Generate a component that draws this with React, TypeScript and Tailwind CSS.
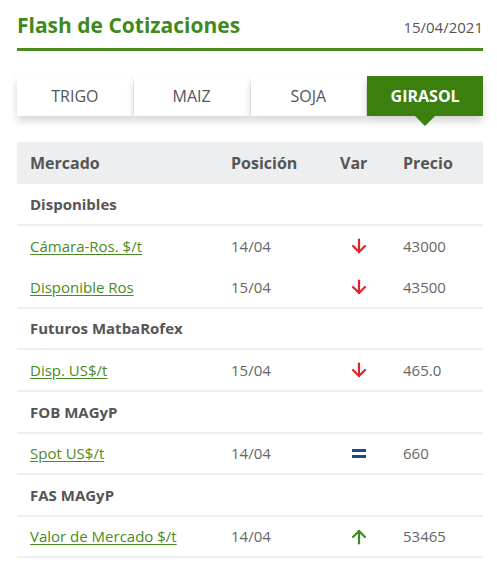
import React from 'react';

type Row =
  | { kind: 'section'; label: string; border?: boolean }
  | { kind: 'data'; label: string; pos: string; v: 'down' | 'up' | 'eq'; price: string; border?: boolean };

const rows: Row[] = [
  { kind: 'section', label: 'Disponibles', border: true },
  { kind: 'data', label: 'Cámara-Ros. $/t', pos: '14/04', v: 'down', price: '43000' },
  { kind: 'data', label: 'Disponible Ros', pos: '15/04', v: 'down', price: '43500', border: true },
  { kind: 'section', label: 'Futuros MatbaRofex', border: true },
  { kind: 'data', label: 'Disp. US$/t', pos: '15/04', v: 'down', price: '465.0', border: true },
  { kind: 'section', label: 'FOB MAGyP', border: true },
  { kind: 'data', label: 'Spot US$/t', pos: '14/04', v: 'eq', price: '660', border: true },
  { kind: 'section', label: 'FAS MAGyP', border: true },
  { kind: 'data', label: 'Valor de Mercado $/t', pos: '14/04', v: 'up', price: '53465', border: true },
];

const tabs = ['TRIGO', 'MAIZ', 'SOJA', 'GIRASOL'];

function VarIcon({ v }: { v: 'down' | 'up' | 'eq' }) {
  if (v === 'eq') {
    return (
      <svg width="16" height="16" viewBox="0 0 16 16">
        <rect x="1" y="4" width="14" height="3" fill="#1d4a8c" />
        <rect x="1" y="10" width="14" height="3" fill="#1d4a8c" />
      </svg>
    );
  }
  const color = v === 'down' ? '#e2232b' : '#3f8a1c';
  return (
    <svg width="16" height="16" viewBox="0 0 16 16" fill="none" stroke={color} strokeWidth="2.2" strokeLinecap="round" strokeLinejoin="round">
      {v === 'down' ? (
        <>
          <path d="M8 1.5v12.5" />
          <path d="M2 8l6 6 6-6" />
        </>
      ) : (
        <>
          <path d="M8 14.5V2" />
          <path d="M2 8l6-6 6 6" />
        </>
      )}
    </svg>
  );
}

export default function App() {
  return (
    <div className="w-[497px] h-[570px] bg-white overflow-hidden" style={{ fontFamily: '"Open Sans", sans-serif' }}>
      <div className="ml-[17px] w-[466px]">
        {/* titulo */}
        <div className="flex items-end justify-between h-[51px] pb-[12px] border-b-[3px] border-[#4a8a1f]">
          <h1 className="text-[21px] font-bold text-[#3f8a1c] leading-none">Flash de Cotizaciones</h1>
          <span className="text-[15px] text-[#555] leading-none mb-[1px]">15/04/2021</span>
        </div>

        {/* tabs */}
        <div className="mt-[25px] grid grid-cols-4 gap-[1px] h-[40px]">
          {tabs.map((t, i) => {
            const active = i === 3;
            return (
              <div
                key={t}
                className={
                  active
                    ? 'relative flex items-center justify-center bg-[#3b800e] text-white font-bold text-[16px] shadow-[0_5px_8px_rgba(0,0,0,0.18)]'
                    : 'flex items-center justify-center bg-white text-[#555] text-[16px] shadow-[0_5px_8px_rgba(0,0,0,0.16)]'
                }
              >
                {t}
                {active && (
                  <span className="absolute left-1/2 -translate-x-1/2 top-full w-0 h-0 border-l-[10px] border-r-[10px] border-t-[10px] border-l-transparent border-r-transparent border-t-[#3b800e]" />
                )}
              </div>
            );
          })}
        </div>

        {/* tabla */}
        <div className="mt-[26px]">
          <div className="grid grid-cols-[201px_109px_63px_1fr] h-[42px] items-center bg-[#edeef0] text-[16px] font-bold text-[#555]">
            <div className="pl-[13px]">Mercado</div>
            <div className="pl-[13px]">Posición</div>
            <div className="pl-[13px]">Var</div>
            <div className="pl-[13px]">Precio</div>
          </div>
          {rows.map((r, i) => (
            <div
              key={i}
              className={`grid grid-cols-[201px_109px_63px_1fr] h-[41.6px] items-center text-[15px] ${r.border ? 'border-b-2 border-[#eeeeee]' : ''}`}
            >
              {r.kind === 'section' ? (
                <div className="pl-[13px] font-bold text-[#555] col-span-4">{r.label}</div>
              ) : (
                <>
                  <div className="pl-[13px]">
                    <a href="#" className="text-[#4a8b23] underline underline-offset-2">{r.label}</a>
                  </div>
                  <div className="pl-[13px] text-[#666]">{r.pos}</div>
                  <div className="pl-[24px] flex items-center">
                    <VarIcon v={r.v} />
                  </div>
                  <div className="pl-[13px] text-[#666]">{r.price}</div>
                </>
              )}
            </div>
          ))}
        </div>
      </div>
    </div>
  );
}
